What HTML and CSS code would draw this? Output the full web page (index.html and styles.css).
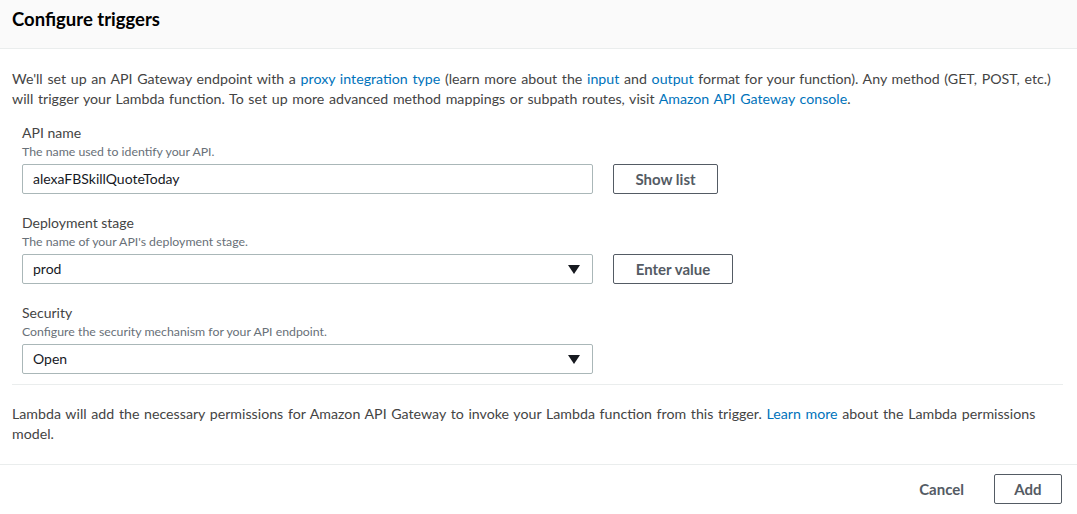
FILE: index.html
```html
<!DOCTYPE html>
<html>
<head>
<meta charset="utf-8">
<link rel="stylesheet" href="styles.css">
</head>
<body>
<div class="panel">
  <div class="header"><h2 class="title">Configure triggers</h2></div>
  <div class="content">
    <p class="intro">We'll set up an API Gateway endpoint with a <a class="link">proxy integration type</a> (learn more about the <a class="link">input</a> and <a class="link">output</a> format for your function). Any method (GET, POST, etc.) will trigger your Lambda function. To set up more advanced method mappings or subpath routes, visit <a class="link">Amazon API Gateway console</a>.</p>
    <div class="fields">
      <div class="field">
        <div class="label">API name</div>
        <div class="hint">The name used to identify your API.</div>
        <div class="row">
          <div class="control">alexaFBSkillQuoteToday</div>
          <button class="btn">Show list</button>
        </div>
      </div>
      <div class="field">
        <div class="label">Deployment stage</div>
        <div class="hint">The name of your API's deployment stage.</div>
        <div class="row">
          <div class="control select">prod<span class="caret"></span></div>
          <button class="btn wide">Enter value</button>
        </div>
      </div>
      <div class="field">
        <div class="label">Security</div>
        <div class="hint">Configure the security mechanism for your API endpoint.</div>
        <div class="row">
          <div class="control select">Open<span class="caret"></span></div>
        </div>
      </div>
    </div>
    <p class="note">Lambda will add the necessary permissions for Amazon API Gateway to invoke your Lambda function from this trigger. <a class="link">Learn more</a> about the Lambda permissions model.</p>
  </div>
  <div class="footer">
    <button class="cancel">Cancel</button>
    <button class="btn add">Add</button>
  </div>
</div>
</body>
</html>
```

FILE: styles.css
```css
* { box-sizing: border-box; }
body {
  margin: 0;
  background: #fff;
  font-family: Lato, "Liberation Sans", sans-serif;
  color: #444;
  font-size: 14px;
}
.header {
  height: 49px;
  background: #fafafa;
  border-bottom: 1px solid #eaeded;
  padding: 9px 12px 0;
}
.title {
  margin: 0;
  font-size: 18.5px;
  line-height: 20px;
  font-weight: 700;
  color: #000;
}
.content {
  padding: 0 14px 0 12px;
}
.intro {
  margin: 20px 0 0;
  line-height: 20px;
  font-size: 14.2px;
  word-spacing: 1.05px;
}
.link { color: #0073bb; text-decoration: none; }
.fields {
  padding: 14px 0 10px 10px;
  border-bottom: 1px solid #eaeded;
  display: flex;
  flex-direction: column;
  gap: 19px;
}
.label {
  line-height: 20px;
  color: #444;
}
.hint {
  margin-top: 1px;
  font-size: 12.3px;
  line-height: 16px;
  color: #687078;
}
.row {
  margin-top: 4px;
  display: flex;
  gap: 20px;
}
.control {
  width: 571px;
  height: 30px;
  border: 1px solid #aab7b8;
  border-radius: 2px;
  padding: 0 10px;
  line-height: 28px;
  color: #16191f;
  display: flex;
  align-items: center;
}
.select { justify-content: space-between; }
.caret {
  width: 0; height: 0;
  border-left: 6px solid transparent;
  border-right: 6px solid transparent;
  border-top: 9px solid #16191f;
  margin-right: 2px;
}
.btn {
  height: 30px;
  width: 105px;
  border: 1px solid #545b64;
  border-radius: 2px;
  background: #fff;
  color: #545b64;
  font-family: inherit;
  font-weight: 700;
  font-size: 15px;
  padding: 0;
}
.wide { width: 120px; }
.note {
  margin: 19px 0 0;
  line-height: 20px;
  font-size: 14.2px;
  word-spacing: 1.05px;
  padding-bottom: 20px;
}
.footer {
  border-top: 1px solid #eaeded;
  padding: 9px 15px 0 0;
  display: flex;
  justify-content: flex-end;
  align-items: center;
  gap: 30px;
}
.cancel {
  border: 0;
  background: none;
  font-family: inherit;
  font-weight: 700;
  font-size: 15px;
  color: #545b64;
  padding: 0;
}
.add { width: 68px; }
```
